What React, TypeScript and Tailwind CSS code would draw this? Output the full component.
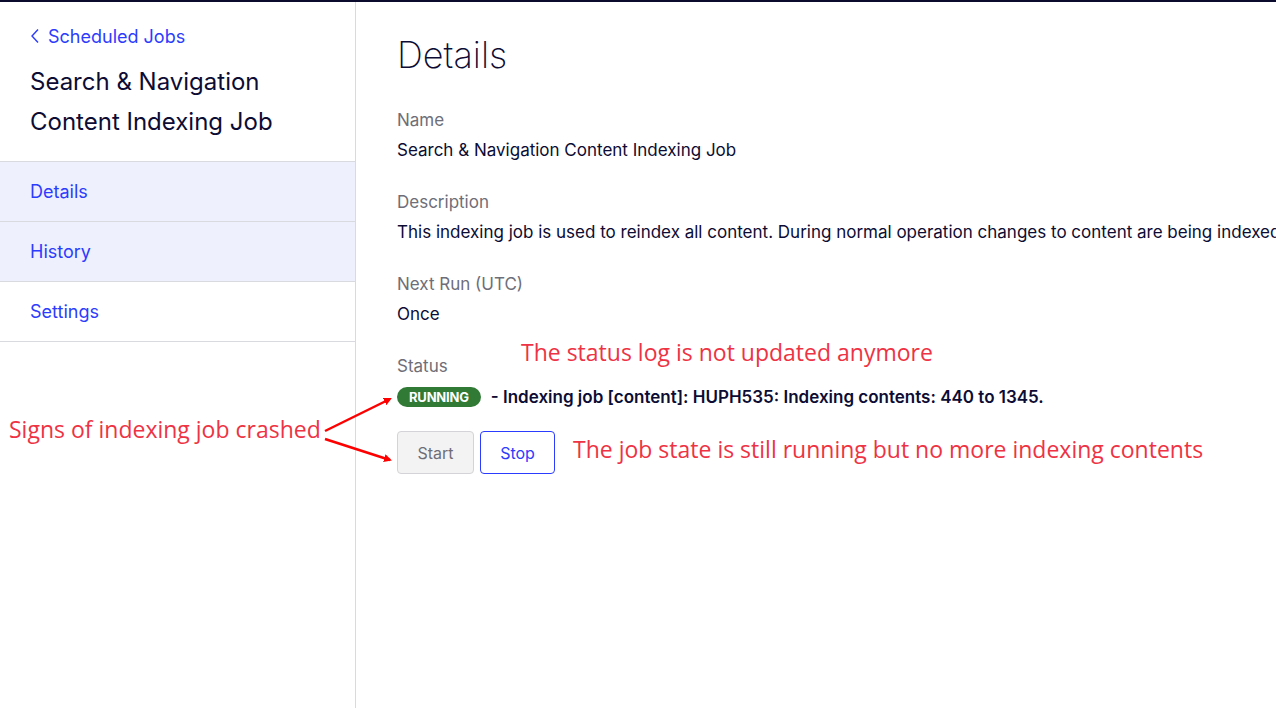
import React from "react";

const navItems = [
  { label: "Details", active: true },
  { label: "History", active: true },
  { label: "Settings", active: false },
];

const fields = [
  { label: "Name", value: "Search & Navigation Content Indexing Job" },
  {
    label: "Description",
    value:
      "This indexing job is used to reindex all content. During normal operation changes to content are being indexed as they occur.",
  },
  { label: "Next Run (UTC)", value: "Once" },
];

export default function App() {
  return (
    <div className="relative h-[708px] w-[1276px] overflow-hidden bg-white font-['Inter',sans-serif] text-[#0c0c34]">
      {/* top bar */}
      <div className="h-[2px] bg-[#0b0b2e]" />

      <div className="flex h-[706px]">
        {/* ── Sidebar ─────────────────────────────── */}
        <aside className="w-[356px] shrink-0 border-r border-[#d9d9e0]">
          <div className="px-[30px] pt-[22px] pb-[19px]">
            <a className="flex items-center gap-[8px] text-[18px] leading-[26px] text-[#2b3cff]">
              <svg width="10" height="16" viewBox="0 0 10 16" fill="none" className="mt-[-2px]">
                <path d="M8 1.5 L2 8 L8 14.5" stroke="#2b3cff" strokeWidth="1.4" />
              </svg>
              Scheduled Jobs
            </a>
            <h1 className="mt-[12px] text-[24px] leading-[40px] text-[#0c0c34]">
              Search &amp; Navigation Content Indexing Job
            </h1>
          </div>
          <nav className="border-t border-[#d9d9e0]">
            {navItems.map((item) => (
              <div
                key={item.label}
                className={
                  "flex h-[60px] items-center border-b border-[#d9d9e0] px-[30px] text-[18px] text-[#2b3cff] " +
                  (item.active ? "bg-[#eef0fd]" : "bg-white")
                }
              >
                {item.label}
              </div>
            ))}
          </nav>
        </aside>

        {/* ── Main ─────────────────────────────── */}
        <main className="flex-1 overflow-hidden whitespace-nowrap pl-[41px] pt-[30px]">
          <h2 className="text-[36px] font-extralight leading-[46px] text-[#0c0c34]">Details</h2>

          <div className="mt-[27px] flex flex-col gap-[22px]">
            {fields.map((f) => (
              <div key={f.label}>
                <div className="text-[17px] leading-[30px] text-[#6e6e78]">{f.label}</div>
                <div className="text-[17px] leading-[30px] text-[#0c0c34]">{f.value}</div>
              </div>
            ))}
            <div>
              <div className="text-[17px] leading-[30px] text-[#6e6e78]">Status</div>
              <div className="flex items-center gap-[10px] leading-[32px]">
                <span className="rounded-full bg-[#317a36] px-[12px] text-[13px] font-bold leading-[20px] tracking-[-0.2px] text-white">
                  RUNNING
                </span>
                <span className="text-[17px] font-semibold text-[#0c0c34]">
                  - Indexing job [content]: HUPH535: Indexing contents: 440 to 1345.
                </span>
              </div>
              <div className="mt-[18px] flex gap-[6px]">
                <button className="h-[43px] w-[77px] rounded-[4px] border border-[#d4d4d8] bg-[#f3f3f3] text-[16px] text-[#6e6e78]">
                  Start
                </button>
                <button className="h-[43px] w-[75px] rounded-[4px] border border-[#2b3cff] bg-white text-[16px] text-[#2b3cff]">
                  Stop
                </button>
              </div>
            </div>
          </div>
        </main>
      </div>

      {/* ── Annotations ─────────────────────────────── */}
      <div className="absolute left-[9px] top-[413px] font-['Open_Sans',sans-serif] text-[23px] leading-[32px] text-[#ee3344]">
        Signs of indexing job crashed
      </div>
      <div className="absolute left-[521px] top-[336px] font-['Open_Sans',sans-serif] text-[23px] leading-[32px] text-[#ee3344]">
        The status log is not updated anymore
      </div>
      <div className="absolute left-[573px] top-[433px] font-['Open_Sans',sans-serif] text-[23px] leading-[32px] text-[#ee3344]">
        The job state is still running but no more indexing contents
      </div>
      <svg className="pointer-events-none absolute left-0 top-0" width="1276" height="708">
        <defs>
          <marker id="ah" markerWidth="8" markerHeight="8" refX="6" refY="4" orient="auto" markerUnits="userSpaceOnUse">
            <path d="M0 0 L8 4 L0 8 Z" fill="#ff0000" />
          </marker>
        </defs>
        <line x1="325" y1="431" x2="390" y2="399" stroke="#ff0000" strokeWidth="2.5" markerEnd="url(#ah)" />
        <line x1="325" y1="439" x2="390" y2="460" stroke="#ff0000" strokeWidth="2.5" markerEnd="url(#ah)" />
      </svg>
    </div>
  );
}
